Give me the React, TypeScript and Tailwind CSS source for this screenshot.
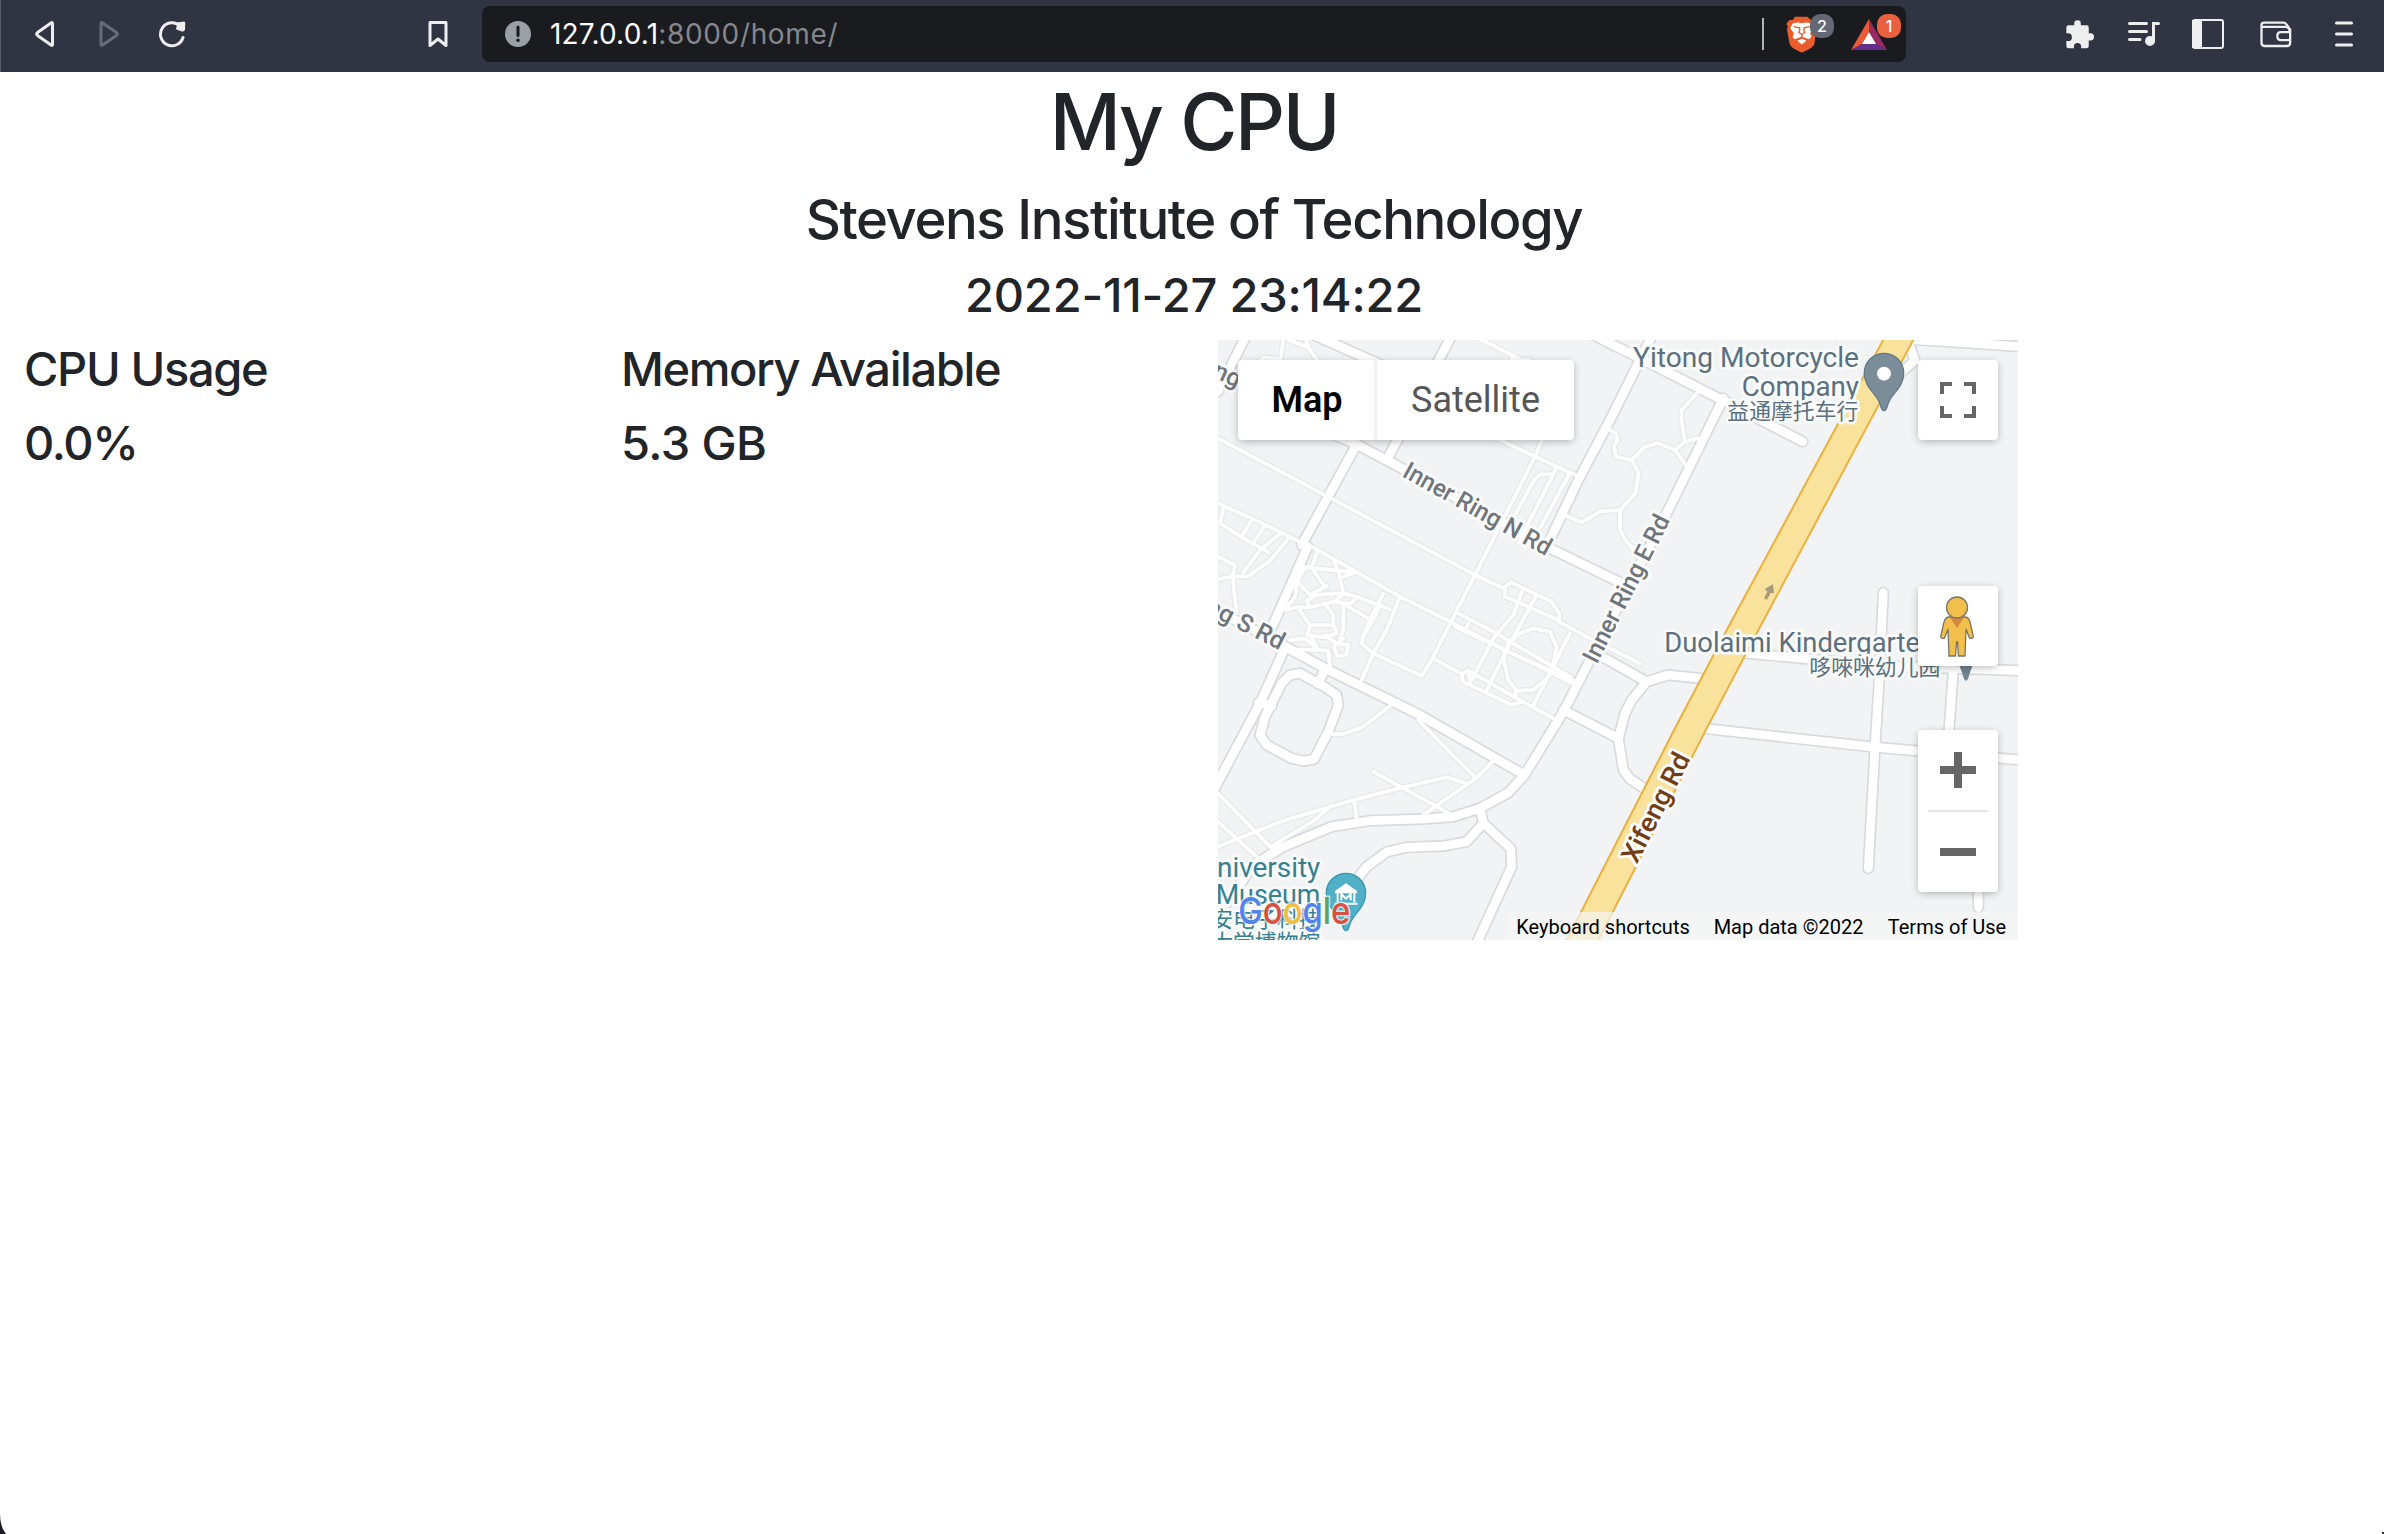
import React from "react";

const INTER = "font-['Inter','Liberation_Sans',sans-serif]";
const ROBOTO = "font-['Roboto','Noto_Sans_CJK_SC',sans-serif]";

/* Footpaths and service lanes of the campus. */
const lanes: string[] = [
  "M24 325L345 495L795 735L880 775L903 757L1025 815L1048 850L1048 876L1140 925L1290 1000",
  "M24 520L140 572L280 640L315 655L570 800L730 880L900 968L1090 1052",
  "M1112 442L975 380L860 325",
  "M1000 320L975 380L795 735L690 940L665 990L635 1038L490 970L455 940L460 915L480 870L520 790",
  "M1025 432L990 434L972 450L885 610",
  "M1040 412L925 640",
  "M1078 432L965 640",
  "M1110 442L1010 630",
  "M1200 300L1218 310L1222 330L1212 350L1218 380L1265 390L1305 350L1345 340L1395 360L1427 405",
  "M1265 390L1286 430L1276 490L1230 540L1170 545L1115 577L1070 558",
  "M1230 540L1230 600L1245 630L1275 662",
  "M1467 183L1415 240L1413 260L1425 335L1465 325",
  "M1395 360L1425 335",
  "M220 30L212 88L162 82L130 110",
  "M235 30L295 52L325 95",
  "M288 30L295 52",
  "M800 22L905 75L905 90L960 90",
  "M905 75L950 98",
  "M40 535L30 580L95 622L178 668",
  "M122 575L100 612",
  "M162 590L130 640",
  "M240 620L180 692L115 738L60 740L24 748",
  "M212 610L150 660L100 728",
  "M24 680L75 705L68 738L74 800L80 850",
  "M322 665L305 712L285 712L262 755L300 795L350 768",
  "M285 712L385 722L440 726L400 740",
  "M305 712L345 772",
  "M370 690L385 722L400 790L375 815L340 822L300 832L290 812L320 795L375 790L410 792L440 800L540 838",
  "M262 755L255 800L225 840L260 832L300 832",
  "M262 830L300 885L370 885L370 855L345 822",
  "M300 885L292 915L345 922L380 910L370 885",
  "M440 800L425 820L400 820L400 900L388 935",
  "M375 815L400 820L430 840L475 865",
  "M510 825L495 860L462 915",
  "M570 800L530 900L490 970L455 1050",
  "M300 915L325 960L355 962L360 1012",
  "M240 930L285 925L325 960L245 958",
  "M345 915L378 940L415 945L410 975L382 978L372 950L400 925",
  "M885 770L885 800L1045 870",
  "M940 775L910 855L850 925L780 1060",
  "M980 795L900 940L828 1085",
  "M1080 910L968 1130",
  "M745 850L850 905L1080 1040L1086 1060L990 1010L735 890",
  "M775 880L765 905",
  "M930 910L970 895L1020 905L1040 950L1025 1030L970 1080L920 1082L895 1050L880 985L895 940L930 910",
  "M920 1082L915 1100",
  "M670 985L755 1032L775 1022L850 1065L938 1115L1030 1165",
  "M755 1032L758 1055L828 1088L905 1125L938 1115",
  "M775 1022L780 1050",
  "M360 1212L400 1212L460 1190L540 1128",
  "M625 1170L798 1345L640 1455",
  "M490 1325L720 1452",
  "M775 1362L710 1342L580 1372L430 1410L220 1472L24 1550",
  "M432 1410L440 1468",
  "M848 1295L798 1345",
  "M360 1430L315 1470L180 1552",
  "M24 1390L190 1560",
  "M24 1475L140 1580",
];

/* Streets drawn with the wide outlined stroke. */
const streets: string[] = [
  "M112 10L24 185",
  "M300 10L500 98L800 240",
  "M728 10L535 382",
  "M380 318L440 343L600 428L1020 655L1230 757L1258 770",
  "M440 343L275 645",
  "M293 650L180 905",
  "M222 960L150 1120L14 1375",
  "M10 835L230 952L345 1015L620 1150L940 1333",
  "M345 1015L325 1062",
  "M270 1030L240 1035L215 1060L165 1160L150 1215L170 1245L245 1285L280 1293L312 1288L355 1205L385 1125L380 1095L340 1068L270 1030",
  "M145 1118L185 1128",
  "M1330 10L1200 270L1105 450L1012 645",
  "M1540 205L1365 560L1140 990L1060 1145L945 1333L895 1388L810 1435L730 1460L640 1467L480 1472L365 1490L220 1550L130 1605L50 1720",
  "M1140 10L1300 90L1540 212L1778 335",
  "M1150 965L1310 1055L1375 1035L1480 1046",
  "M1310 1055L1265 1110L1245 1150L1225 1225L1240 1320L1258 1345L1320 1387",
  "M1060 1140L1225 1225",
  "M1590 968L1800 987L2020 1008L2430 1022",
  "M1480 1195L2000 1252L2430 1290",
  "M2020 788L2007 1060L1995 1250L1975 1615",
  "M2230 1020L2215 1230",
  "M2305 1690L2305 1732",
  "M2090 28L2200 34L2430 50",
  "M2100 50L2115 92L2055 142",
  "M810 1438L820 1480L770 1535L700 1548L590 1552L530 1566L470 1610L400 1700",
  "M820 1480L902 1555L905 1610L800 1840",
];

type LabelProps = {
  x: number;
  y: number;
  text: string;
  size: number;
  length?: number;
  angle?: number;
  fill: string;
  anchor?: "start" | "end";
  weight?: number;
};

function Label({ x, y, text, size, length, angle = 0, fill, anchor = "start", weight = 400 }: LabelProps) {
  return (
    <text
      transform={`translate(${x} ${y}) rotate(${angle})`}
      fontSize={size}
      fontWeight={weight}
      fill={fill}
      textAnchor={anchor}
      textLength={length}
      lengthAdjust="spacingAndGlyphs"
      stroke="#fafbfb"
      strokeWidth={17}
      strokeLinejoin="round"
      paintOrder="stroke"
    >
      {text}
    </text>
  );
}

function MapCanvas() {
  const cap = { strokeLinecap: "round" as const, strokeLinejoin: "round" as const, fill: "none" };
  return (
    <svg viewBox="24 30 2400 1800" className={`block h-[600px] w-[800px] bg-[#f1f3f4] ${ROBOTO}`}>
      <g {...cap} stroke="#e8e9ea" strokeWidth={19}>
        {lanes.map((d) => <path key={d} d={d} />)}
      </g>
      <g {...cap} stroke="#d9dae0" strokeWidth={36}>
        {streets.map((d) => <path key={d} d={d} />)}
      </g>
      <g {...cap} stroke="#ffffff" strokeWidth={11}>
        {lanes.map((d) => <path key={d} d={d} />)}
      </g>
      <g {...cap} stroke="#ffffff" strokeWidth={26}>
        {streets.map((d) => <path key={d} d={d} />)}
      </g>
      <path d="M825 20L345 910L195 1195L-135 1840H-40L290 1195L440 910L915 20Z" transform="translate(1200)" fill="#f9e29c" stroke="#ecb03c" strokeWidth={6} />
      <path d="M1662 805L1672 785L1664 777L1689 763L1692 790L1682 789L1671 809Z" fill="#a89a7c" />

      <Label x={80} y={174} text="ng" size={74} angle={25} anchor="end" fill="#70757c" weight={500} />
      <Label x={574} y={438} text="Inner Ring N Rd" size={74} length={496} angle={29} fill="#70757c" weight={500} />
      <Label x={1160} y={1004} text="Inner Ring E Rd" size={74} length={487} angle={-63} fill="#70757c" weight={500} />
      <Label x={209} y={961} text="ng S Rd" size={74} angle={27} anchor="end" fill="#70757c" weight={500} />
      <Label x={1280} y={1604} text="Xifeng Rd" size={80} length={358} angle={-63} fill="#733c12" weight={500} />

      <Label x={1947} y={112} text="Yitong Motorcycle" size={82} length={678} anchor="end" fill="#5a7080" />
      <Label x={1947} y={197} text="Company" size={82} length={352} anchor="end" fill="#5a7080" />
      <Label x={1945} y={268} text="益通摩托车行" size={65.5} anchor="end" fill="#5a7080" />
      <Label x={1363} y={966} text="Duolaimi Kindergarten" size={82} length={812} fill="#5a7080" />
      <Label x={1798} y={1034} text="哆唻咪幼儿园" size={65.5} fill="#5a7080" />
      <Label x={331} y={1640} text="niversity" size={82} length={310} anchor="end" fill="#37808f" />
      <Label x={331} y={1722} text="Museum" size={82} length={314} anchor="end" fill="#37808f" />
      <Label x={331} y={1792} text="安电子科技" size={65.5} anchor="end" fill="#37808f" />
      <Label x={331} y={1860} text="大学博物馆" size={65.5} anchor="end" fill="#37808f" />

      <path d="M2022 242C2016 242 2014 236 2011 225C2002 190 1963 175 1963 129A59 59 0 0 1 2081 129C2081 175 2042 190 2033 225C2030 236 2028 242 2022 242Z" fill="#7b8d99" stroke="#63798a" strokeWidth={4} />
      <circle cx={2022} cy={131} r={21} fill="#fff" />
      <path d="M2245 1000H2291C2283 1018 2279 1030 2275 1044Q2268 1060 2261 1044C2257 1030 2253 1018 2245 1000Z" fill="#6f8592" />

      <path d="M408 902C402 902 400 896 397 885C388 850 349 835 349 789A59 59 0 0 1 467 789C467 835 428 850 419 885C416 896 414 902 408 902Z" transform="translate(0 900)" fill="#50b0c7" stroke="#3d99ad" strokeWidth={4} />
      <path d="M375 1690V1683L408 1660L441 1683V1690Z" fill="#fff" />
      <path d="M383 1690V1717M433 1690V1717M374 1721H442M394 1711V1692L408 1706L422 1692V1711" fill="none" stroke="#fff" strokeWidth={6} />

      <text x={85} y={1782} fontSize={112} fontWeight={500} fontFamily="Inter, sans-serif" textLength={336} lengthAdjust="spacingAndGlyphs" stroke="#ffffffb0" strokeWidth={9} paintOrder="stroke">
        <tspan fill="#5284ec">G</tspan>
        <tspan fill="#d85140">o</tspan>
        <tspan fill="#f1be42">o</tspan>
        <tspan fill="#5284ec">g</tspan>
        <tspan fill="#58a55c">l</tspan>
        <tspan fill="#d85140">e</tspan>
      </text>
    </svg>
  );
}

function MapControls() {
  const shadow = "shadow-[0_2px_8px_-1px_rgba(0,0,0,0.3)]";
  return (
    <>
      <div className={`absolute left-5 top-5 flex h-20 rounded bg-white text-[36px] leading-[80px] ${shadow}`}>
        <span className="w-[139px] border-r border-[#f0f0f0] text-center font-semibold text-black shadow-[inset_-4px_0_4px_-3px_rgba(0,0,0,0.1)]">Map</span>
        <span className="w-[197px] text-center text-[#565656]">Satellite</span>
      </div>
      <div className="absolute right-5 top-5 flex flex-col">
        <div className={`flex size-20 items-center justify-center rounded bg-white ${shadow}`}>
          <svg viewBox="0 0 36 36" className="size-9" fill="none" stroke="#666" strokeWidth={4}>
            <path d="M2 12V2H12M24 2H34V12M34 24V34H24M12 34H2V24" />
          </svg>
        </div>
        <div className={`mt-[146px] flex size-20 justify-center rounded bg-white pt-[10px] ${shadow}`}>
          <svg viewBox="0 0 34 61" className="mr-[2px] h-[61px] w-[34px]" fill="#f2bf4b" stroke="#7a7568" strokeWidth={1.3}>
            <path d="M9 21H25C28 21 29 23 30 26L33.300 40C33.500 42 31 43 29.500 42L26 33L25 60H18.500L17.500 46H16.500L15.500 60H9L8 33L4.500 42C3 43 .5 42 .7 40L4 26C5 23 6 21 9 21Z" />
            <path d="M10 21.500H24L17 32Z" fill="#d78741" stroke="none" />
            <circle cx="17" cy="11.500" r="10.500" />
          </svg>
        </div>
        <div className={`mt-16 flex h-[162px] w-20 flex-col items-center rounded bg-white ${shadow}`}>
          <svg viewBox="0 0 36 36" className="my-[22px] size-9" stroke="#666" strokeWidth={8}>
            <path d="M18 0V36M0 18H36" />
          </svg>
          <div className="h-0.5 w-[60px] bg-[#e6e6e6]" />
          <div className="mt-9 h-2 w-9 bg-[#666]" />
        </div>
      </div>
      <div className="absolute bottom-0 right-0 flex h-7 text-[20px] leading-[31px] text-black">
        <span className="w-[195px] whitespace-nowrap bg-[#f5f5f5]/70 pr-[3px] text-center">Keyboard shortcuts</span>
        <span className="w-[175px] whitespace-nowrap bg-[#f5f5f5]/80 pr-[2px] text-center">Map data ©2022</span>
        <span className="w-[141px] whitespace-nowrap bg-[#f5f5f5]/80 pr-px text-center">Terms of Use</span>
      </div>
    </>
  );
}

function BraveShield() {
  return (
    <svg viewBox="108 46 92 112" className="h-[37px] w-[31px]">
      <path d="M134 48H172L182 58L192 56L201 68L198 80L194 126C192 136 186 140 180 144L160 155Q155 158 150 155L130 144C124 140 120 136 117 126L110 86L113 78L108 70L117 58L128 58Z" fill="#ea5c2b" />
      <path d="M128 68L142 66L155 68L168 66L182 68L190 82L180 98L184 110L176 116L164 112L155 108L146 112L134 116L127 110L131 98L120 82Z" fill="#fff" />
      <path d="M141 121L155 115L169 121L155 132Z" fill="#fff" />
      <path d="M130 78L148 82L149 88L146 96L155 102L164 96L161 88L162 82L180 78M155 102V112" fill="none" stroke="#ea5c2b" strokeWidth={4} />
    </svg>
  );
}

function Toolbar() {
  return (
    <header className={`flex h-[72px] w-[2384px] border-l border-[#5a5c68] bg-[#313443] pb-2.5 pt-1.5 ${INTER}`}>
      <div className="flex w-[481px] items-center pl-[33px]">
        <svg viewBox="0 0 22 28" className="h-7 w-[22px]" fill="none" stroke="#eee" strokeWidth={3} strokeLinejoin="round">
          <path d="M18.500 3.500V24.500Q18.500 26 17 25L3.500 15.500Q2 14 3.500 12.500L17 3Q18.500 2 18.500 3.500Z" />
        </svg>
        <svg viewBox="0 0 22 28" className="ml-[42px] h-7 w-[22px]" fill="none" stroke="#696b77" strokeWidth={3} strokeLinejoin="round">
          <path d="M3 3.500V24.500Q3 26 4.500 25L18.500 15.500Q20 14 18.500 12.500L4.500 3Q3 2 3 3.500Z" />
        </svg>
        <svg viewBox="0 0 28 28" className="ml-[38px] size-7" fill="none" stroke="#eee" strokeWidth={3} strokeLinecap="round">
          <path d="M25 17.500A11.500 11.500 0 1 1 22 6" />
          <path d="M19 2.500L26 1.500Q27.500 1.500 27.300 3L27 9.500Q26.500 12 24 11.500L18.500 9.500Q17 8.500 18.500 7.500Z" fill="#eee" stroke="none" />
        </svg>
        <svg viewBox="0 0 22 28" className="ml-[241px] h-7 w-[22px]" fill="none" stroke="#eee" strokeWidth={3} strokeLinejoin="round">
          <path d="M3 2.500H19V25.500L11 19L3 25.500Z" />
        </svg>
      </div>
      <div className="flex w-[1424px] items-center rounded-lg bg-[#1a1b1f]">
        <svg viewBox="0 0 26 26" className="ml-[23px] size-[26px]">
          <circle cx="13" cy="13" r="13" fill="#9aa0a6" />
          <path d="M13 6V14.500" stroke="#1a1b1f" strokeWidth={3} strokeLinecap="round" />
          <circle cx="13" cy="19.200" r="1.700" fill="#1a1b1f" />
        </svg>
        <span className="ml-[19px] whitespace-nowrap text-[28px] tracking-[0.65px] text-[#85878b]">
          <span className="tracking-[0.2px] text-white">127.0.0.1</span>:8000/home/
        </span>
        <div className="ml-auto flex items-center">
          <div className="h-8 w-0.5 bg-[#b4b5b7]" />
          <div className="relative ml-[22px]">
            <BraveShield />
            <span className="absolute -top-0.5 left-[24px] flex size-6 items-center justify-center rounded-[10px] bg-[#646774] text-[16px] font-medium text-white">2</span>
          </div>
          <div className="relative ml-[34px] mr-[19px]">
            <svg viewBox="0 0 36 31" className="h-[31px] w-9">
              <path d="M18 0L0 31L11 25L18 13Z" fill="#ee5937" />
              <path d="M18 0L36 31L25 25L18 13Z" fill="#9a2a62" />
              <path d="M0 31L11 25H25L36 31Z" fill="#652f8f" />
              <path d="M18 13L25 25H11Z" fill="#fff" />
            </svg>
            <span className="absolute -top-[5px] left-[26px] flex size-6 items-center justify-center rounded-[10px] bg-[#e8603d] text-[16px] font-medium text-white">1</span>
          </div>
        </div>
      </div>
      <div className="flex items-center">
        <svg viewBox="49 57 88 88" className="ml-[160px] size-[29px]" fill="#eee">
          <path d="M74 73V68A10 10 0 0 1 94 68V73H112Q118 73 118 79V97H123A11 11 0 0 1 123 119H118V136Q118 143 112 143H95V138A11 11 0 0 0 73 138V143H57Q50 143 50 136V121H55A12 12 0 0 0 55 97H50V79Q50 73 57 73Z" />
        </svg>
        <svg viewBox="0 0 32 26" className="ml-[33px] h-[26px] w-8" fill="none" stroke="#eee" strokeWidth={3} strokeLinecap="round">
          <path d="M1.500 2.500H18.500M1.500 10.500H18.500M1.500 18.500H12M25.500 20V2.500H30.500" />
          <circle cx="22" cy="20" r="5" fill="#eee" stroke="none" />
        </svg>
        <svg viewBox="0 0 32 30" className="ml-8 h-[30px] w-8" fill="none" stroke="#eee" strokeWidth={2}>
          <rect x="1" y="1" width="30" height="28" rx="2" />
          <path d="M1 2H9V28H1Z" fill="#eee" />
        </svg>
        <svg viewBox="631 64 96 82" className="ml-9 h-[27px] w-8" fill="none" stroke="#eee" strokeWidth={7}>
          <path d="M720 96V92Q720 82 706 82H636M635 84V76Q635 69 643 69H702Q708 69 712 76L722 90V130Q722 140 712 140H645Q635 140 635 130V76" />
          <path d="M720 98H694Q683 98 683 110T694 122H720" />
        </svg>
        <svg viewBox="0 0 18 26" className="ml-[43px] h-[26px] w-[18px]" stroke="#eee" strokeWidth={3} strokeLinecap="round">
          <path d="M1.500 2H16.500M1.500 13H16.500M1.500 24H16.500" />
        </svg>
      </div>
    </header>
  );
}

export default function App() {
  return (
    <div className="relative h-[1534px] w-[2384px] overflow-hidden bg-white">
      <Toolbar />
      <main className={`w-[2388px] font-medium text-[#212529] ${INTER}`}>
        <div className="whitespace-nowrap text-center">
          <h1 className="mb-4 pt-[2px] text-[78px] leading-[96px] tracking-[-2.3px]">My CPU</h1>
          <h3 className="mb-[13px] text-[54.5px] leading-[67px] tracking-[-1.45px]">Stevens Institute of Technology</h3>
          <h4 className="mb-4 text-[47px] leading-[58px] tracking-[-0.2px]">2022-11-27 23:14:22</h4>
        </div>
        <div className="flex text-[47px] leading-[58px]">
          <section className="w-[597px] pl-6">
            <h4 className="mb-4 tracking-[-1.35px]">CPU Usage</h4>
            <h4 className="tracking-[-1.4px]">0.0%</h4>
          </section>
          <section className="w-[597px] pl-6">
            <h4 className="mb-4 tracking-[-1.4px]">Memory Available</h4>
            <h4 className="tracking-[-0.6px]">5.3 GB</h4>
          </section>
          <section className="pl-6">
            <div className={`relative h-[600px] w-[800px] overflow-hidden font-normal ${ROBOTO}`}>
              <MapCanvas />
              <MapControls />
            </div>
          </section>
        </div>
      </main>
      <svg viewBox="0 0 20 20" className="absolute bottom-0 left-0 size-5" fill="#1a1b22">
        <path d="M0 0Q0 13 6 20H0Z" />
      </svg>
      <div className="absolute bottom-0 right-0 size-0.5 bg-[#333]" />
    </div>
  );
}
